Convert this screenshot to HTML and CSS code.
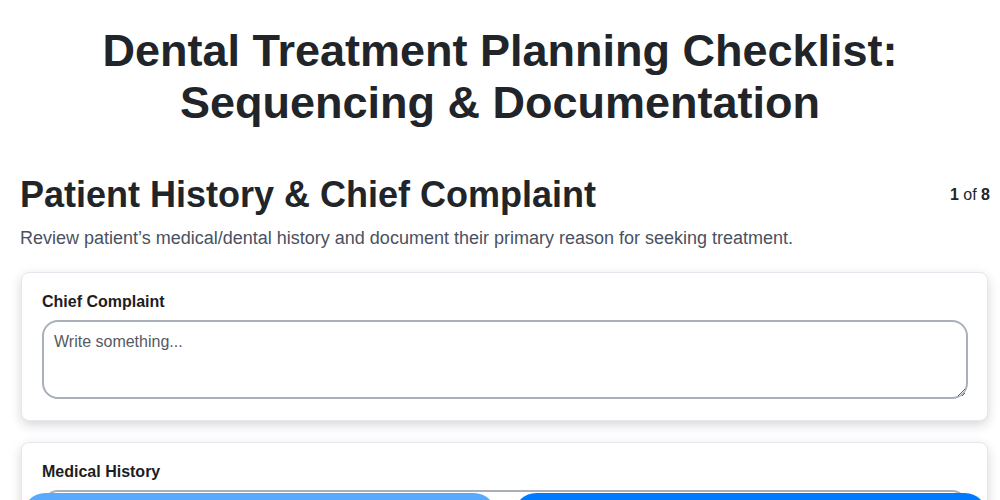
FILE: index.html
```html
<!DOCTYPE html>
<html lang="en">
<head>
<meta charset="utf-8">
<title>Dental Treatment Planning Checklist</title>
<link rel="stylesheet" href="styles.css">
</head>
<body>
<main class="page">
  <h1 class="title">Dental Treatment Planning Checklist:<br>Sequencing &amp; Documentation</h1>
  <section class="step">
    <header class="step-head">
      <h2 class="step-title">Patient History &amp; Chief Complaint</h2>
      <div class="step-count"><b>1</b> of <b>8</b></div>
    </header>
    <p class="step-desc">Review patient’s medical/dental history and document their primary reason for seeking treatment.</p>
    <div class="card">
      <label class="card-label" for="cc">Chief Complaint</label>
      <textarea id="cc" class="field" placeholder="Write something..."></textarea>
    </div>
    <div class="card">
      <label class="card-label" for="mh">Medical History</label>
      <textarea id="mh" class="field" placeholder="Write something..."></textarea>
    </div>
  </section>
</main>
<nav class="nav">
  <button class="btn btn-prev" type="button">Previous</button>
  <button class="btn btn-next" type="button">Next</button>
</nav>
</body>
</html>
```
FILE: styles.css
```css
* { box-sizing: border-box; }
html, body { margin: 0; padding: 0; background: #fff; }
body {
  font-family: "Liberation Sans", Arial, sans-serif;
  color: #212529;
}
.page {
  padding: 25px 0 80px;
}
.title {
  margin: 0;
  text-align: center;
  font-size: 45px;
  line-height: 52px;
  font-weight: 700;
  color: #212529;
}
.step {
  margin-top: 44px;
  padding: 0 10px 0 20px;
}
.step-head {
  display: flex;
  justify-content: space-between;
  align-items: center;
}
.step-title {
  margin: 0;
  font-size: 36px;
  line-height: 44px;
  font-weight: 700;
  color: #212529;
}
.step-count {
  font-size: 16px;
  color: #212529;
}
.step-count b { font-weight: 700; }
.step-desc {
  margin: 10px 0 23px;
  font-size: 18px;
  line-height: 22px;
  color: #4a5160;
}
.card {
  display: flex;
  flex-direction: column;
  gap: 9px;
  margin: 0 2px 21px 1px;
  padding: 20px 19px 21px 20px;
  background: #fff;
  border: 1px solid #e6e6ee;
  border-radius: 8px;
  box-shadow: 0 4px 12px rgba(0, 0, 0, 0.16);
}
.card-label {
  font-size: 16px;
  line-height: 18px;
  font-weight: 700;
  color: #1d1d1f;
}
.field {
  display: block;
  width: 100%;
  height: 79px;
  padding: 10px 10px;
  font-family: "Liberation Sans", Arial, sans-serif;
  font-size: 16px;
  line-height: 20px;
  color: #212529;
  border: 2px solid #a9b0b8;
  border-radius: 16px;
  background: #fff;
  resize: vertical;
}
.field::placeholder { color: #555a62; opacity: 1; }
.nav {
  position: fixed;
  left: 22px;
  right: 12px;
  bottom: -40px;
  display: flex;
  gap: 16px;
}
.btn {
  flex: 1;
  height: 47px;
  padding: 20px 0 0;
  border: 0;
  border-radius: 24px;
  font-family: "Liberation Sans", Arial, sans-serif;
  font-size: 16px;
  line-height: 20px;
  color: #fff;
}
.btn-prev { background: #59a9ff; }
.btn-next { background: #007bff; }
```
